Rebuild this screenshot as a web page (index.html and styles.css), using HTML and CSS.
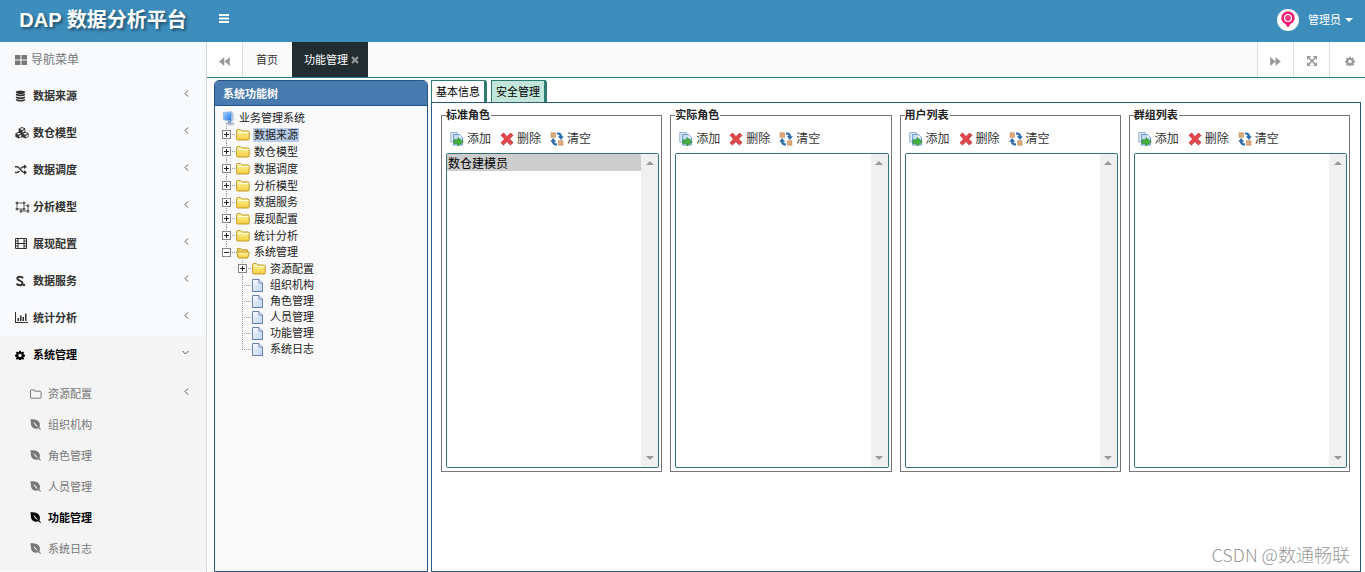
FILE: index.html
```html
<!DOCTYPE html>
<html lang="zh-CN">
<head>
<meta charset="utf-8">
<title>DAP 数据分析平台</title>
<link rel="stylesheet" href="styles.css">
</head>
<body>
<svg class="sprite" aria-hidden="true">
  <defs>
    <linearGradient id="g-folder" x1="0" y1="0" x2="0" y2="1"><stop offset="0" stop-color="#fff6a8"/><stop offset="1" stop-color="#f3cd3c"/></linearGradient>
    <linearGradient id="g-doc" x1="0" y1="0" x2="1" y2="1"><stop offset="0" stop-color="#fff"/><stop offset="1" stop-color="#b9d2fa"/></linearGradient>
    <linearGradient id="g-pc" x1="0" y1="0" x2="1" y2="1"><stop offset="0" stop-color="#9fd4ff"/><stop offset="1" stop-color="#1f6fe0"/></linearGradient>
  </defs>
  <symbol id="i-grid" viewBox="0 0 12 10"><path d="M0 0h5.4v4.5H0zM6.500 0H12v4.500H6.500zM0 5.500h5.400V10H0zM6.500 5.500H12V10H6.500z"/></symbol>
  <symbol id="i-db" viewBox="0 0 12 12"><ellipse cx="6" cy="2" rx="5" ry="2"/><path d="M1 3.300c2 1.500 8 1.500 10 0v1.600c-1 1.900-9 1.900-10 0zM1 6.200c2 1.500 8 1.500 10 0v1.600c-1 1.900-9 1.900-10 0zM1 9.100c2 1.500 8 1.500 10 0v1.200c-1 2.200-9 2.200-10 0z"/></symbol>
  <symbol id="i-cubes" viewBox="0 0 14 12"><path fill-rule="evenodd" d="M7 0l3.300 1.400v3.400l3.300 1.500v3.500L10.300 11.500 7 9.900l-3.300 1.600L.4 9.800V6.300l3.300-1.500V1.400zM7 1L4.700 2 7 3l2.300-1zM7.400 5.500l2.200-1V2.900l-2.200 1zM3.700 5.700l-2.300 1 2.300 1 2.300-1zM4.100 10.400l2.200-1.100V7.700L4.100 8.700zM10.300 5.700l-2.300 1 2.300 1 2.300-1zM10.700 10.400l2.200-1.100V7.700l-2.200 1z"/></symbol>
  <symbol id="i-random" viewBox="0 0 12 11"><path fill="none" stroke="currentColor" stroke-width="1.500" d="M0 2.800h2c3 0 4 5.600 7 5.600h1M0 8.400h2c1 0 1.800-.7 2.400-1.600M6 4.400C6.700 3.500 7.700 2.800 9 2.800h1"/><path d="M9 .5l3 2.300L9 5.100zM9 6.100l3 2.300-3 2.300z"/></symbol>
  <symbol id="i-ungroup" viewBox="0 0 15 12"><path fill="none" stroke="currentColor" stroke-width=".8" d="M2 2h7v6H2zM10.500 4.500H13v5.500H6V8.500"/><path d="M.8.800h2.200v2.200H.8zM8 .8h2.200v2.200H8zM.8 7h2.200v2.200H.8zM8 7h2.200v2.200H8zM12 3.500h2.200v2.200H12zM4.800 9.200h2.200v2.200H4.800zM12 9.200h2.200v2.200H12z"/><path fill="#f9fafc" d="M1.500 1.500h.8v.8h-.8zM8.700 1.500h.8v.8h-.8zM1.500 7.700h.8v.8h-.8zM8.700 7.700h.8v.8h-.8zM12.700 4.200h.8V5h-.8zM5.500 9.900h.8v.8h-.8zM12.700 9.900h.8v.8h-.8z"/></symbol>
  <symbol id="i-film" viewBox="0 0 12 11"><path fill="none" stroke="currentColor" d="M.5.5h11v10H.500zM3 .5v10M9 .5v10M3 5.500h6M.5 3H3M.5 5.500H3M.5 8H3M9 3h2.500M9 5.500h2.500M9 8h2.500"/></symbol>
  <symbol id="i-scribd" viewBox="0 0 11 12"><path fill="none" stroke="currentColor" stroke-width="2" d="M8 3.200C7 1.300 2.500 1.200 2.300 3.500c0 2.300 5.200 2 5.200 4.700 0 2.500-4.500 2.600-5.900.4"/><circle cx="9" cy="10" r="1.200"/></symbol>
  <symbol id="i-chart" viewBox="0 0 13 11"><path d="M0 0h1v10h12v1H0zM2.500 6H4v3H2.500zM5 3.500h1.500V9H5zM7.500 5H9v4H7.500zM10 1.500h1.500V9H10z"/></symbol>
  <symbol id="i-cog" viewBox="0 0 12 12"><path fill-rule="evenodd" d="M5 .8h2l.3 1.500 1 .4 1.300-.9 1.400 1.400-.9 1.300.4 1 1.500.3v2l-1.500.3-.4 1 .9 1.300-1.400 1.400-1.300-.9-1 .4-.3 1.400H5l-.3-1.400-1-.4-1.300.9L1 10.400l.9-1.300-.4-1L0 7.800v-2l1.500-.3.4-1L1 3.200l1.400-1.400 1.300.9 1-.4zM6 4.600a2.100 2.100 0 1 0 0 4.200 2.100 2.100 0 0 0 0-4.200z"/></symbol>
  <symbol id="i-folder-o" viewBox="0 0 12 10"><path fill="none" stroke="currentColor" d="M.5 1.800Q.5.800 1.500.800h2.300q1 0 1 1v.4h5.300q1 0 1 1v5q0 1-1 1H1.500q-1 0-1-1z"/></symbol>
  <symbol id="i-leaf" viewBox="0 0 11 11"><path fill-rule="evenodd" d="M.3.300C5-.200 8.800 1 9.700 4.300c.4 1.700.1 3.300-.3 4.300L11 10.600l-.5.300-2.100-1.600C4.800 10.300 2 9 1.200 6.200.6 4.200 1.200 2.300.3.300zM3.300 3c1 2.400 2.400 4 4.500 5.200C6.800 5.800 5.400 4.200 3.300 3z"/></symbol>
  <symbol id="i-chev-left" viewBox="0 0 5 7"><path fill="none" stroke="currentColor" d="M4 .5l-3 3 3 3"/></symbol>
  <symbol id="i-chev-down" viewBox="0 0 7 5"><path fill="none" stroke="currentColor" d="M.5 1l3 3 3-3"/></symbol>
  <symbol id="i-bars" viewBox="0 0 10 9"><path d="M0 0h10v2H0zM0 3.500h10v2H0zM0 7h10v2H0z"/></symbol>
  <symbol id="i-backward" viewBox="0 0 11 9"><path d="M5.300 0v9L0 4.500zM10.800 0v9L5.500 4.500z"/></symbol>
  <symbol id="i-forward" viewBox="0 0 11 9"><path d="M.2 0v9l5.300-4.500zM5.500 0v9l5.300-4.500z"/></symbol>
  <symbol id="i-expand" viewBox="0 0 10 10"><path d="M0 0h4L0 4zM10 0v4L6 0zM0 10V6l4 4zM10 10H6l4-4z"/><path stroke="currentColor" stroke-width="1.700" d="M1.500 1.500l7 7M8.500 1.500l-7 7"/></symbol>
  <symbol id="i-times" viewBox="0 0 8 8"><path fill="none" stroke="currentColor" stroke-width="2.200" d="M1 1l6 6M7 1L1 7"/></symbol>
  <symbol id="i-avatar" viewBox="0 0 22 22"><circle cx="11" cy="11" r="11" fill="#fff"/><path fill="#ee1a73" d="M11 2.200a6.700 6.700 0 0 1 6.700 6.700c0 3.200-2.900 5.200-4.400 6.300L11 18.800l-2.300-3.600c-1.500-1.100-4.400-3.100-4.400-6.300A6.700 6.700 0 0 1 11 2.200z"/><circle cx="11" cy="9" r="3.500" fill="#f23d87" stroke="#fff" stroke-width="1.200"/></symbol>
  <symbol id="i-pc" viewBox="0 0 14 15"><ellipse cx="8" cy="12.800" rx="4.500" ry="1.700" fill="#b9bfd2"/><path fill="#8e9cc0" d="M6 9h3v3.500H6z"/><path fill="url(#g-pc)" stroke="#8fb8e8" d="M1.500 1.500L9.500.8v9.400l-8-1.400z"/><path fill="#c3cce4" d="M9.800.8l2 1.200v7.500l-2 .9z"/></symbol>
  <symbol id="i-folder" viewBox="0 0 14 13"><path fill="url(#g-folder)" stroke="#c19a2a" d="M.6 3Q.6 1.500 2 1.500h2.500L6 3h6q1.200 0 1.200 1.200v6.600q0 1.200-1.200 1.200H1.800Q.6 12 .6 10.800z"/><path stroke="#fffbd0" fill="none" d="M1.500 4.500h11"/></symbol>
  <symbol id="i-folder-open" viewBox="0 0 14 13"><path fill="#efd060" stroke="#c19a2a" d="M1.500 11V2.600h3.300L6 3.800h5.500V6"/><path fill="url(#g-folder)" stroke="#c19a2a" d="M.5 6h12.800l-1.500 6H2.500z"/></symbol>
  <symbol id="i-doc" viewBox="0 0 11 13"><path fill="url(#g-doc)" stroke="#6880ad" d="M.5.5h6.500l3.500 3.500v8.500H.5z"/><path fill="#fff" stroke="#6880ad" d="M7 .5V4h3.500"/></symbol>
  <symbol id="i-add" viewBox="0 0 14 14"><path fill="#dfeaf6" stroke="#8fb0d3" d="M.8.600h6.500v9.400H.8z"/><path fill="#c4dcf5" stroke="#6e9bcb" d="M3.500 2.500h6l3 3v7.500h-9z"/><path fill="#f3f9ff" d="M9.300 2.800v3h3z"/><path fill="#46b03c" stroke="#24822a" stroke-width=".6" d="M4 7.800h4V5.500l5.300 4.300L8 14v-2.400H4z"/></symbol>
  <symbol id="i-del" viewBox="0 0 13 13"><path fill="#e2484b" stroke="#c02a2e" stroke-width=".8" d="M1 3l2.300-2L6.500 4.300 9.800 1 12 3.200 8.800 6.500l3.300 3.200-2.500 2.300-3.200-3.200-3.200 3.300L1 9.900l3.300-3.400z"/></symbol>
  <symbol id="i-clear" viewBox="0 0 14 14"><path fill="#e2a978" stroke="#c08a58" stroke-width=".6" d="M1 .8h4.500v4.500H1zM8.500 8.700H13v4.500H8.500z"/><path fill="#2c6cab" d="M7 .5c3.700 0 5 1.600 5 3.700h1.800L11 8 7.800 4.200h1.800C9.600 3 8.900 2.500 7 2.500zM7 13.500c-3.700 0-5-1.600-5-3.700H.2L3 6l3.200 3.800H4.400c0 1.200.7 1.700 2.600 1.700z"/></symbol>
</svg>

<header class="topbar">
  <h1 class="brand">DAP 数据分析平台</h1>
  <button class="menu-toggle" type="button" aria-label="切换菜单"><svg width="10" height="9"><use href="#i-bars"/></svg></button>
  <button class="user" type="button"><svg width="22" height="22"><use href="#i-avatar"/></svg><span>管理员</span><i class="caret"></i></button>
</header>

<div class="shell">
  <nav class="sidebar">
    <h2 class="side-title"><svg width="12" height="10"><use href="#i-grid"/></svg>导航菜单</h2>
    <ul class="menu">
      <li><a href="#"><span class="mi"><svg width="11" height="12"><use href="#i-db"/></svg></span>数据来源<svg class="chev" width="5" height="7"><use href="#i-chev-left"/></svg></a></li>
      <li><a href="#"><span class="mi"><svg width="14" height="12"><use href="#i-cubes"/></svg></span>数仓模型<svg class="chev" width="5" height="7"><use href="#i-chev-left"/></svg></a></li>
      <li><a href="#"><span class="mi"><svg width="12" height="11"><use href="#i-random"/></svg></span>数据调度<svg class="chev" width="5" height="7"><use href="#i-chev-left"/></svg></a></li>
      <li><a href="#"><span class="mi"><svg width="15" height="12"><use href="#i-ungroup"/></svg></span>分析模型<svg class="chev" width="5" height="7"><use href="#i-chev-left"/></svg></a></li>
      <li><a href="#"><span class="mi"><svg width="12" height="11"><use href="#i-film"/></svg></span>展现配置<svg class="chev" width="5" height="7"><use href="#i-chev-left"/></svg></a></li>
      <li><a href="#"><span class="mi"><svg width="11" height="12"><use href="#i-scribd"/></svg></span>数据服务<svg class="chev" width="5" height="7"><use href="#i-chev-left"/></svg></a></li>
      <li><a href="#"><span class="mi"><svg width="13" height="11"><use href="#i-chart"/></svg></span>统计分析<svg class="chev" width="5" height="7"><use href="#i-chev-left"/></svg></a></li>
      <li class="open"><a href="#"><span class="mi"><svg width="10" height="10"><use href="#i-cog"/></svg></span>系统管理<svg class="chev" width="7" height="5"><use href="#i-chev-down"/></svg></a>
        <ul class="submenu">
          <li><a href="#"><span class="mi"><svg width="12" height="10"><use href="#i-folder-o"/></svg></span>资源配置<svg class="chev" width="5" height="7"><use href="#i-chev-left"/></svg></a></li>
          <li><a href="#"><span class="mi"><svg width="11" height="11"><use href="#i-leaf"/></svg></span>组织机构</a></li>
          <li><a href="#"><span class="mi"><svg width="11" height="11"><use href="#i-leaf"/></svg></span>角色管理</a></li>
          <li><a href="#"><span class="mi"><svg width="11" height="11"><use href="#i-leaf"/></svg></span>人员管理</a></li>
          <li><a href="#" class="current"><span class="mi"><svg width="11" height="11"><use href="#i-leaf"/></svg></span>功能管理</a></li>
          <li><a href="#"><span class="mi"><svg width="11" height="11"><use href="#i-leaf"/></svg></span>系统日志</a></li>
        </ul>
      </li>
    </ul>
  </nav>

  <main class="main">
    <div class="tabbar">
      <button class="tool first" type="button" aria-label="向左"><svg width="11" height="9"><use href="#i-backward"/></svg></button>
      <button class="page-tab" type="button">首页</button>
      <button class="page-tab active" type="button">功能管理<svg width="8" height="8"><use href="#i-times"/></svg></button>
      <span class="spacer"></span>
      <button class="tool" type="button" aria-label="向右"><svg width="11" height="9"><use href="#i-forward"/></svg></button>
      <button class="tool" type="button" aria-label="全屏"><svg width="10" height="10"><use href="#i-expand"/></svg></button>
      <button class="tool last" type="button" aria-label="设置"><svg width="10" height="10"><use href="#i-cog"/></svg></button>
    </div>

    <div class="work">
      <section class="tree-panel">
        <h2>系统功能树</h2>
        <div class="tree">
          <div class="root"><svg width="14" height="15"><use href="#i-pc"/></svg><span>业务管理系统</span></div>
          <ul>
            <li><div class="node"><i class="box plus"></i><svg width="14" height="13"><use href="#i-folder"/></svg><span class="picked">数据来源</span></div></li>
            <li><div class="node"><i class="box plus"></i><svg width="14" height="13"><use href="#i-folder"/></svg><span>数仓模型</span></div></li>
            <li><div class="node"><i class="box plus"></i><svg width="14" height="13"><use href="#i-folder"/></svg><span>数据调度</span></div></li>
            <li><div class="node"><i class="box plus"></i><svg width="14" height="13"><use href="#i-folder"/></svg><span>分析模型</span></div></li>
            <li><div class="node short"><i class="box plus"></i><svg width="14" height="13"><use href="#i-folder"/></svg><span>数据服务</span></div></li>
            <li><div class="node"><i class="box plus"></i><svg width="14" height="13"><use href="#i-folder"/></svg><span>展现配置</span></div></li>
            <li><div class="node"><i class="box plus"></i><svg width="14" height="13"><use href="#i-folder"/></svg><span>统计分析</span></div></li>
            <li><div class="node short"><i class="box"></i><svg width="14" height="13"><use href="#i-folder-open"/></svg><span>系统管理</span></div>
              <ul>
                <li><div class="node"><i class="box plus"></i><svg width="14" height="13"><use href="#i-folder"/></svg><span>资源配置</span></div></li>
                <li><div class="node short leaf"><svg width="11" height="13"><use href="#i-doc"/></svg><span>组织机构</span></div></li>
                <li><div class="node short leaf"><svg width="11" height="13"><use href="#i-doc"/></svg><span>角色管理</span></div></li>
                <li><div class="node short leaf"><svg width="11" height="13"><use href="#i-doc"/></svg><span>人员管理</span></div></li>
                <li><div class="node short leaf"><svg width="11" height="13"><use href="#i-doc"/></svg><span>功能管理</span></div></li>
                <li><div class="node short leaf"><svg width="11" height="13"><use href="#i-doc"/></svg><span>系统日志</span></div></li>
              </ul>
            </li>
          </ul>
        </div>
      </section>

      <section class="detail">
        <div class="detail-tabs">
          <button type="button">基本信息</button>
          <button type="button" class="active">安全管理</button>
        </div>
        <div class="detail-body">
          <fieldset>
            <legend>标准角色</legend>
            <div class="actions">
              <button type="button"><svg width="14" height="14"><use href="#i-add"/></svg>添加</button>
              <button type="button"><svg width="14" height="14"><use href="#i-del"/></svg>删除</button>
              <button type="button"><svg width="14" height="14"><use href="#i-clear"/></svg>清空</button>
            </div>
            <div class="listbox"><select multiple size="10" aria-label="标准角色"><option selected>数仓建模员</option></select><div class="scroll"><i class="up"></i><i class="down"></i></div></div>
          </fieldset>
          <fieldset>
            <legend>实际角色</legend>
            <div class="actions">
              <button type="button"><svg width="14" height="14"><use href="#i-add"/></svg>添加</button>
              <button type="button"><svg width="14" height="14"><use href="#i-del"/></svg>删除</button>
              <button type="button"><svg width="14" height="14"><use href="#i-clear"/></svg>清空</button>
            </div>
            <div class="listbox"><select multiple size="10" aria-label="实际角色"></select><div class="scroll"><i class="up"></i><i class="down"></i></div></div>
          </fieldset>
          <fieldset>
            <legend>用户列表</legend>
            <div class="actions">
              <button type="button"><svg width="14" height="14"><use href="#i-add"/></svg>添加</button>
              <button type="button"><svg width="14" height="14"><use href="#i-del"/></svg>删除</button>
              <button type="button"><svg width="14" height="14"><use href="#i-clear"/></svg>清空</button>
            </div>
            <div class="listbox"><select multiple size="10" aria-label="用户列表"></select><div class="scroll"><i class="up"></i><i class="down"></i></div></div>
          </fieldset>
          <fieldset>
            <legend>群组列表</legend>
            <div class="actions">
              <button type="button"><svg width="14" height="14"><use href="#i-add"/></svg>添加</button>
              <button type="button"><svg width="14" height="14"><use href="#i-del"/></svg>删除</button>
              <button type="button"><svg width="14" height="14"><use href="#i-clear"/></svg>清空</button>
            </div>
            <div class="listbox"><select multiple size="10" aria-label="群组列表"></select><div class="scroll"><i class="up"></i><i class="down"></i></div></div>
          </fieldset>
        </div>
      </section>
    </div>
  </main>
</div>
<div class="watermark">CSDN @数通畅联</div>
</body>
</html>
```

FILE: styles.css
```css
* { box-sizing: border-box; }

body {
  margin: 0;
  min-height: 100vh;
  display: flex;
  flex-direction: column;
  background: #fff;
  color: #333;
  font: 11px/16px "Liberation Sans", "Noto Sans CJK SC", sans-serif;
}

ul { list-style: none; margin: 0; padding: 0; }
h1, h2 { margin: 0; }
a { color: inherit; text-decoration: none; }
button { margin: 0; padding: 0; border: 0; background: none; color: inherit; font: inherit; cursor: pointer; }
svg { fill: currentColor; flex: none; }
.sprite { position: absolute; width: 0; height: 0; }

/* Top bar */
.topbar {
  display: flex;
  align-items: center;
  height: 42px;
  padding-right: 12px;
  background: #3c8dbc;
  color: #fff;
}
.brand {
  width: 206px;
  padding-bottom: 3px;
  text-align: center;
  font-size: 20px;
  line-height: 28px;
  font-weight: bold;
  text-shadow: 2px 2px 3px rgba(0, 0, 0, .45);
}
.menu-toggle { display: flex; padding: 0 13px 6px; }
.user { display: flex; align-items: center; margin-left: auto; padding-bottom: 2px; }
.user span { margin: 0 4px 0 9px; }
.caret { border: 4px solid transparent; border-top-color: #fff; border-bottom: 0; }

.shell { flex: 1; display: flex; }

/* Sidebar */
.sidebar { flex: none; width: 207px; background: #f9fafc; border-right: 1px solid #d2d6de; }
.side-title {
  display: flex;
  align-items: center;
  gap: 4px;
  height: 35px;
  padding-left: 15px;
  color: #777;
  font-size: 12px;
  font-weight: normal;
}
.menu a { display: flex; align-items: center; height: 37px; padding: 0 17px 0 15px; font-weight: bold; color: #333; }
.menu .mi { display: flex; width: 18px; }
.menu .chev { margin: 0 0 4px auto; color: #555; }
.menu .open { background: #f4f4f5; }
.menu .open > a { color: #000; }
.menu .submenu { padding: 5px 0 7px; }
.menu .submenu a { height: 31px; padding-left: 30px; font-weight: normal; color: #777; }
.menu .submenu .current { color: #000; font-weight: bold; }

/* Page tabs */
.main { flex: 1; min-width: 0; display: flex; flex-direction: column; }
.tabbar { display: flex; height: 36px; background: #fafafa; border-bottom: 1px solid #2f7f92; }
.tool {
  display: flex;
  align-items: center;
  justify-content: center;
  width: 36px;
  padding-top: 3px;
  background: #fff;
  color: #999;
  border-left: 1px solid #ddd;
}
.tool.first { border-left: 0; border-right: 1px solid #ddd; }
.tool.last { padding-left: 4px; }
.page-tab { display: flex; align-items: center; gap: 3px; padding: 0 14px 0 13px; }
.page-tab.active { padding: 0 9px 0 12px; background: #222d32; color: #fff; }
.page-tab svg { color: #999; }
.spacer { flex: 1; }

.work { flex: 1; display: flex; gap: 3px; padding: 2px 4px 0 7px; }

/* Function tree */
.tree-panel {
  flex: none;
  width: 214px;
  display: flex;
  flex-direction: column;
  border: 1px solid #2a5486;
  border-radius: 5px 5px 0 0;
  background: #f9f9f9;
  overflow: hidden;
}
.tree-panel h2 {
  height: 25px;
  padding-left: 8px;
  border-bottom: 1px solid #23508a;
  background: #477aae;
  color: #fff;
  font-size: 11px;
  line-height: 26px;
}
.tree { padding: 4px 7px; color: #222; }
.root { display: flex; align-items: center; gap: 3px; height: 16px; }
.tree ul ul { margin-left: 16px; }
.tree li {
  background: repeating-linear-gradient(#999 0 1px, transparent 1px 2px) 4px 0 / 1px 100% no-repeat;
}
.tree li:last-child { background-size: 1px 8px; }
.node {
  display: flex;
  align-items: center;
  height: 17px;
  background: repeating-linear-gradient(90deg, #999 0 1px, transparent 1px 2px) 4px 8px / 10px 1px no-repeat;
}
.node.short { height: 16px; }
.node svg { margin-right: 3px; }
.node span { padding: 0 1px; line-height: 14px; }
.node.leaf { padding-left: 14px; }
.node.leaf svg { margin-right: 6px; }
.picked { background: #b8cdea; }
.box {
  width: 9px;
  height: 9px;
  margin-right: 5px;
  border: 1px solid #888;
  background: linear-gradient(#222, #222) 1px 3px / 5px 1px no-repeat, #fff;
}
.box.plus {
  background: linear-gradient(#222, #222) 1px 3px / 5px 1px no-repeat,
    linear-gradient(#222, #222) 3px 1px / 1px 5px no-repeat, #fff;
}

/* Detail area */
.detail { flex: 1; min-width: 0; display: flex; flex-direction: column; }
.detail-tabs { display: flex; gap: 4px; height: 22px; }
.detail-tabs button {
  padding: 0 4px;
  border: 1px solid #2d7c72;
  border-right-width: 3px;
  border-bottom: 0;
  border-radius: 0 3px 0 0;
  color: #000;
}
.detail-tabs .active { background: #c2e6da; }
.detail-body {
  flex: 1;
  display: grid;
  grid-template-columns: repeat(4, minmax(0, 1fr));
  gap: 8px;
  align-items: start;
  padding: 4px 10px 0 9px;
  border: 1px solid #2a5a7c;
}
fieldset { min-width: 0; margin: 0; padding: 0 2px 3px 4px; border: 1px solid #777; }
legend { padding: 0 1px 0 0; font-weight: bold; color: #222; }
.actions { display: flex; gap: 9px; padding: 8px 4px 6px; font-size: 12px; }
.actions button { display: flex; align-items: center; gap: 3px; }
.listbox { display: flex; height: 315px; border: 1px solid #33727f; border-radius: 2px; overflow: hidden; }
.listbox select {
  flex: 1;
  min-width: 0;
  margin: 0;
  padding: 0;
  border: 0;
  outline: 0;
  background: #fff;
  color: #000;
  font: 12px/17px "Liberation Sans", "Noto Sans CJK SC", sans-serif;
  overflow: hidden;
}
.listbox option { height: 17px; min-height: 17px; padding: 0 1px; color: #000; }
.listbox option:checked { background: #cdcdcd linear-gradient(#cdcdcd, #cdcdcd); }
.scroll { display: flex; flex-direction: column; justify-content: space-between; align-items: center; width: 17px; padding: 7px 0; background: #f0f0f0; }
.scroll i { border: 4px solid transparent; }
.scroll .up { border-top: 0; border-bottom-color: #999; }
.scroll .down { border-bottom: 0; border-top-color: #999; }

.watermark {
  position: absolute;
  right: 15px;
  bottom: 5px;
  color: #999;
  font-family: "Noto Sans CJK SC", sans-serif;
  font-weight: 300;
  font-size: 18px;
  line-height: 26px;
}
```
